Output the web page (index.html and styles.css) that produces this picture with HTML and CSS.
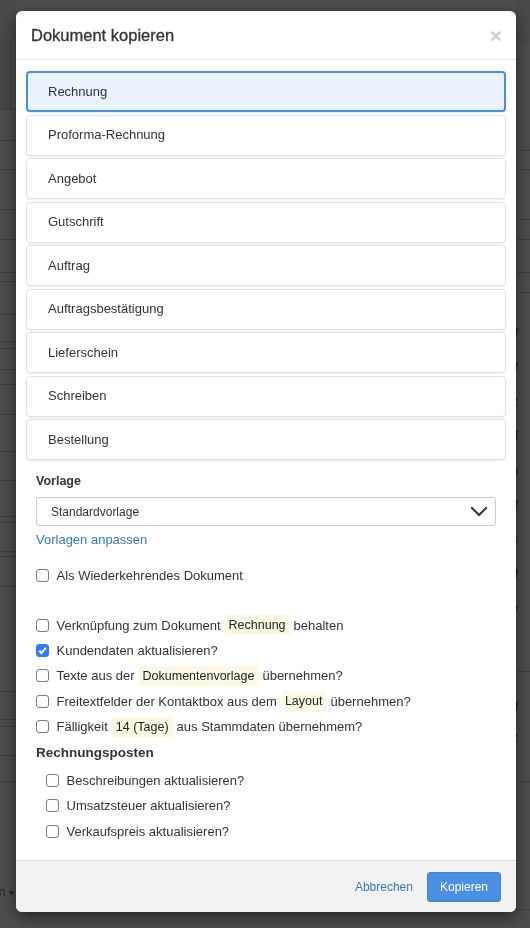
FILE: index.html
```html
<!DOCTYPE html>
<html lang="de">
<head>
    <meta charset="UTF-8">
    <meta name="viewport" content="width=device-width, initial-scale=1.0">
    <title>Dokument kopieren</title>
    <link rel="stylesheet" href="styles.css">
</head>
<body>
    <!-- page behind the dialog -->
    <div class="page">
        <div class="page-col page-left">
            <div class="band"></div>
            <div class="row row-box"><div class="box-edge"></div></div>
            <div class="row"></div><div class="row"></div><div class="row"></div><div class="row"></div>
            <div class="row"></div><div class="row"></div><div class="row"></div><div class="row"></div>
            <div class="row"></div><div class="row"></div><div class="row"></div><div class="row"></div>
            <div class="row"></div><div class="row"></div><div class="row"></div><div class="row"></div>
            <div class="row"></div><div class="row"></div><div class="row"></div><div class="row"></div>
            <div class="row"></div><div class="row"></div><div class="row"></div><div class="row"></div>
            <div class="row-last">
                <span class="menu-link">Aktionen <span class="caret">▾</span></span>
            </div>
        </div>
        <div class="page-col page-main">
            <div class="comments">
                <svg class="comment-icon" width="16" height="16" viewBox="0 0 16 16"><circle cx="8" cy="8" r="7" fill="none" stroke="currentColor" stroke-width="1.5"/></svg>
                <span>1 Kommentar</span>
            </div>
        </div>
        <div class="page-col page-right">
            <div class="band"></div>
            <div class="row"></div><div class="row"></div><div class="row"></div><div class="row"></div>
            <div class="row"></div><div class="row"></div>
            <div class="row cells cells-a">
                <div class="cell">Entwurf</div><div class="cell">Entwurf</div><div class="cell">Bezahlt</div>
                <div class="cell">Entwurf</div><div class="cell">Offen</div><div class="cell">Entwurf</div>
                <div class="cell">Bezahlt</div><div class="cell">Entwurf</div><div class="cell">Offene</div>
            </div>
            <div class="row cells cells-b">
                <div class="cell">Entwurf</div><div class="cell">Bezahlt</div>
            </div>
            <div class="row"></div>
            <div class="row-last"></div>
        </div>
    </div>

    <div class="backdrop"></div>

    <div class="modal">
        <div class="modal-header">
            <h4 class="modal-title">Dokument kopieren</h4>
            <span class="close">&times;</span>
        </div>

        <div class="modal-body">
            <div class="doc-types">
                <div class="doc-type active">Rechnung</div>
                <div class="doc-type">Proforma-Rechnung</div>
                <div class="doc-type">Angebot</div>
                <div class="doc-type">Gutschrift</div>
                <div class="doc-type">Auftrag</div>
                <div class="doc-type">Auftragsbestätigung</div>
                <div class="doc-type">Lieferschein</div>
                <div class="doc-type">Schreiben</div>
                <div class="doc-type">Bestellung</div>
            </div>

            <div class="field-label">Vorlage</div>
            <div class="select">
                <span>Standardvorlage</span>
                <svg width="18" height="11" viewBox="0 0 18 11"><polyline points="1.2,1.2 9,9 16.8,1.2" fill="none" stroke="#333" stroke-width="2"/></svg>
            </div>
            <a class="link link-templates">Vorlagen anpassen</a>

            <div class="checks checks-recurring">
                <label class="check"><span class="box"></span>Als Wiederkehrendes Dokument</label>
            </div>

            <div class="checks checks-options">
                <label class="check"><span class="box"></span>Verknüpfung zum Dokument <span class="tag">Rechnung</span> behalten</label>
                <label class="check"><span class="box checked"><svg width="13" height="13" viewBox="0 0 13 13"><polyline points="3.2,6.8 5.4,9 9.8,3.8" fill="none" stroke="#fff" stroke-width="2"/></svg></span>Kundendaten aktualisieren?</label>
                <label class="check"><span class="box"></span>Texte aus der <span class="tag">Dokumentenvorlage</span> übernehmen?</label>
                <label class="check"><span class="box"></span>Freitextfelder der Kontaktbox aus dem <span class="tag">Layout</span> übernehmen?</label>
                <label class="check"><span class="box"></span>Fälligkeit <span class="tag">14 (Tage)</span> aus Stammdaten übernehmem?</label>
            </div>

            <h5 class="section-title">Rechnungsposten</h5>
            <div class="checks checks-items">
                <label class="check"><span class="box"></span>Beschreibungen aktualisieren?</label>
                <label class="check"><span class="box"></span>Umsatzsteuer aktualisieren?</label>
                <label class="check"><span class="box"></span>Verkaufspreis aktualisieren?</label>
            </div>
        </div>

        <div class="modal-footer">
            <a class="link">Abbrechen</a>
            <button class="btn-primary">Kopieren</button>
        </div>
    </div>
</body>
</html>
```

FILE: styles.css
```css
* {
    box-sizing: border-box;
}
body {
    margin: 0;
    font-family: "Liberation Sans", Arial, sans-serif;
    color: #333;
    height: 100vh;
    overflow: hidden;
}

/* Page behind the dialog */
.page {
    display: grid;
    grid-template-columns: 16px 1fr 14px;
    height: 100vh;
    overflow: hidden;
    background: #fff;
}
.page-col {
    display: grid;
    min-width: 0;
}
.page-left {
    grid-template-rows: 42px 68px 31px 29px 40px 30px 33px 9px 33px 27px 7px 21px 15px 30px 37px 29px 36px 6px 29px 5px 30px 105px 28px 7px 29px 26px 1fr;
}
.page-right {
    grid-template-rows: 43px 108px 19px 50px 20px 33px 20px 379px 110px 128px 1fr;
}
.band {
    background: #f3f3f3;
}
.row {
    border-bottom: 1px solid #cfcfcf;
}
.row-box {
    display: flex;
}
.box-edge {
    width: 11px;
    background: #ebebeb;
    border-right: 1px solid #d0d0d0;
}
.row-last {
    display: flex;
    justify-content: flex-end;
    overflow: hidden;
    padding: 101px 2px 0 0;
}
.menu-link {
    white-space: nowrap;
    font-size: 13px;
    line-height: 18px;
    color: #5b8fd0;
}
.caret {
    font-size: 10px;
}
.page-main {
    align-content: end;
}
.comments {
    height: 17px;
    overflow: hidden;
    display: flex;
    align-items: flex-start;
    gap: 5px;
    padding: 7px 0 0 211px;
    font-size: 14px;
    line-height: 20px;
    color: #777;
}
.comment-icon {
    margin-top: 2px;
}
.cells {
    display: flex;
    flex-direction: column;
    overflow: hidden;
}
.cells-a {
    padding-top: 23px;
}
.cells-b {
    padding-top: 19px;
}
.cell {
    display: flex;
    justify-content: flex-end;
    padding-right: 12px;
    font-size: 13px;
    line-height: 34.4px;
    color: #555;
    white-space: nowrap;
}
.cells-b .cell {
    line-height: 31px;
}

.backdrop {
    position: fixed;
    inset: 0;
    background: rgba(0, 0, 0, 0.7);
}

/* Copy dialog */
.modal {
    position: fixed;
    top: 11px;
    left: 16px;
    width: 500px;
    background: #fff;
    border-radius: 6px;
    box-shadow: 0 5px 15px rgba(0, 0, 0, 0.5);
    overflow: hidden;
}
.modal-header {
    height: 49px;
    display: flex;
    align-items: center;
    justify-content: space-between;
    padding: 0 14px 0 15px;
    border-bottom: 1px solid #e2e2e2;
}
.modal-title {
    margin: 0;
    font-size: 16.5px;
    font-weight: normal;
    color: #333;
    -webkit-text-stroke: 0.3px #333;
}
.close {
    font-size: 21px;
    font-weight: bold;
    line-height: 1;
    color: #000;
    opacity: 0.2;
}
.modal-body {
    padding: 11px 20px 20px;
}
.doc-types {
    display: flex;
    flex-direction: column;
    gap: 2.55px;
    margin: 0 -10px;
}
.doc-type {
    height: 41px;
    padding: 11.5px 21px;
    font-size: 13px;
    line-height: 16px;
    border: 1px solid #e1e1e1;
    border-radius: 4px;
    box-shadow: 0 1px 2px rgba(0, 0, 0, 0.08);
}
.doc-type.active {
    border: 2px solid #4a90e2;
    padding: 10.5px 20px;
    background: #eaf2fd;
}
.field-label {
    margin-top: 12px;
    font-size: 12.5px;
    font-weight: bold;
    line-height: 18px;
}
.select {
    display: flex;
    align-items: center;
    justify-content: space-between;
    height: 29px;
    margin-top: 7px;
    padding: 0 7px 0 14px;
    border: 1px solid #ccc;
    border-radius: 3px;
    font-size: 12px;
}
.link {
    color: #337ab7;
    text-decoration: none;
    cursor: pointer;
}
.link-templates {
    display: block;
    margin-top: 5px;
    font-size: 13px;
    line-height: 18px;
}
.checks {
    display: flex;
    flex-direction: column;
    gap: 7.3px;
}
.checks-recurring {
    margin-top: 17.5px;
}
.checks-options {
    margin-top: 31.5px;
}
.checks-items {
    margin-top: 9px;
    padding-left: 10px;
}
.check {
    display: flex;
    align-items: center;
    height: 18px;
    font-size: 13px;
    white-space: nowrap;
}
.box {
    flex: none;
    width: 13px;
    height: 13px;
    margin-right: 7.5px;
    border: 1px solid #7c7c7c;
    border-radius: 3px;
    background: #fff;
}
.box.checked {
    border-color: #2f7cf6;
    background: #2f7cf6;
}
.box.checked svg {
    display: block;
    margin: -1px;
}
.tag {
    margin: 0 4px;
    padding: 3px 4px;
    font-size: 12.5px;
    color: #222;
    background: #fcf8e3;
}
.section-title {
    margin: 7px 0 0;
    font-size: 13.5px;
    font-weight: bold;
    line-height: 20px;
}
.modal-footer {
    display: flex;
    align-items: center;
    justify-content: flex-end;
    gap: 14px;
    padding: 11px 15px 9.5px;
    background: #f2f2f2;
    border-top: 1px solid #dcdcdc;
}
.modal-footer .link {
    font-size: 12px;
}
.btn-primary {
    height: 30px;
    padding: 0 12px;
    font-family: inherit;
    font-size: 12px;
    color: #fff;
    background: #4a90e2;
    border: 1px solid #3f86d8;
    border-radius: 3px;
}
```
